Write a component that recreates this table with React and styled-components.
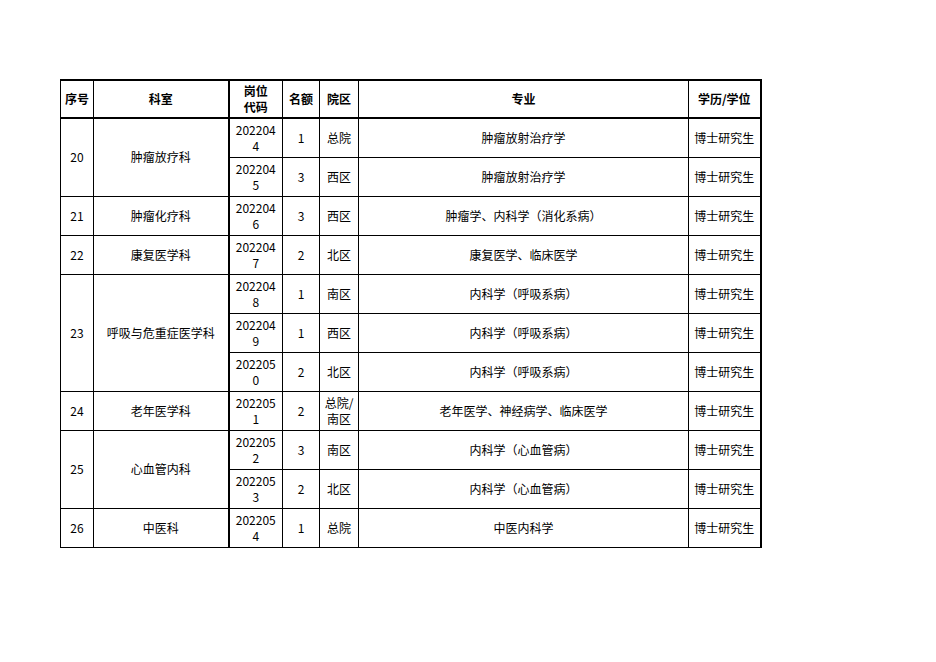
import React from 'react';
import styled, { createGlobalStyle } from 'styled-components';

const GlobalStyle = createGlobalStyle`
  html, body {
    margin: 0;
    padding: 0;
    background: #ffffff;
  }
  body {
    font-family: "Noto Sans CJK SC", "Noto Sans", sans-serif;
    color: #000;
  }
`;

const Page = styled.div`
  width: 936px;
  height: 662px;
  padding: 79px 0 0 60px;
  box-sizing: border-box;
`;

const Sheet = styled.table`
  border-collapse: collapse;
  table-layout: fixed;
  width: 700px;
  border-top: 2px solid #000;
  border-right: 2px solid #000;
  border-left: 1px solid #000;
  border-bottom: 1px solid #000;
  font-size: 12px;
  line-height: 16px;
`;

const HeadRow = styled.tr`
  height: 38px;
  border-bottom: 2px solid #000;
`;

const Row = styled.tr`
  height: 39px;
`;

const HeadCell = styled.th`
  border: 1px solid #000;
  border-left: ${(p) => (p.$strong ? '2px' : '1px')} solid #000;
  padding: 0 2px;
  font-weight: 700;
  text-align: center;
  vertical-align: middle;
  white-space: nowrap;
`;

const Cell = styled.td`
  border: 1px solid #000;
  border-left: ${(p) => (p.$strong ? '2px' : '1px')} solid #000;
  padding: 0 2px;
  font-weight: 400;
  text-align: center;
  vertical-align: middle;
  white-space: nowrap;
`;

const columns = [33, 135, 54, 37, 39, 330, 72];

const groups = [
  {
    no: 20,
    dept: '肿瘤放疗科',
    posts: [
      ['2022044', 1, '总院', '肿瘤放射治疗学'],
      ['2022045', 3, '西区', '肿瘤放射治疗学'],
    ],
  },
  { no: 21, dept: '肿瘤化疗科', posts: [['2022046', 3, '西区', '肿瘤学、内科学（消化系病）']] },
  { no: 22, dept: '康复医学科', posts: [['2022047', 2, '北区', '康复医学、临床医学']] },
  {
    no: 23,
    dept: '呼吸与危重症医学科',
    posts: [
      ['2022048', 1, '南区', '内科学（呼吸系病）'],
      ['2022049', 1, '西区', '内科学（呼吸系病）'],
      ['2022050', 2, '北区', '内科学（呼吸系病）'],
    ],
  },
  { no: 24, dept: '老年医学科', posts: [['2022051', 2, '总院/南区', '老年医学、神经病学、临床医学']] },
  {
    no: 25,
    dept: '心血管内科',
    posts: [
      ['2022052', 3, '南区', '内科学（心血管病）'],
      ['2022053', 2, '北区', '内科学（心血管病）'],
    ],
  },
  { no: 26, dept: '中医科', posts: [['2022054', 1, '总院', '中医内科学']] },
];

// 岗位代码 wraps after the sixth digit, as in the sheet
const splitCode = (code) => (
  <>
    {code.slice(0, 6)}
    <br />
    {code.slice(6)}
  </>
);

const splitArea = (area) => {
  const i = area.indexOf('/');
  if (i < 0) return area;
  return (
    <>
      {area.slice(0, i + 1)}
      <br />
      {area.slice(i + 1)}
    </>
  );
};

const App = () => (
  <Page>
    <GlobalStyle />
    <Sheet>
      <colgroup>
        {columns.map((w, i) => (
          <col key={i} style={{ width: w }} />
        ))}
      </colgroup>
      <thead>
        <HeadRow>
          <HeadCell>序号</HeadCell>
          <HeadCell>科室</HeadCell>
          <HeadCell $strong>
            岗位
            <br />
            代码
          </HeadCell>
          <HeadCell>名额</HeadCell>
          <HeadCell>院区</HeadCell>
          <HeadCell>专业</HeadCell>
          <HeadCell>学历/学位</HeadCell>
        </HeadRow>
      </thead>
      <tbody>
        {groups.map((g) =>
          g.posts.map(([code, count, area, major], i) => (
            <Row key={code}>
              {i === 0 && <Cell rowSpan={g.posts.length}>{g.no}</Cell>}
              {i === 0 && <Cell rowSpan={g.posts.length}>{g.dept}</Cell>}
              <Cell $strong>{splitCode(code)}</Cell>
              <Cell>{count}</Cell>
              <Cell>{splitArea(area)}</Cell>
              <Cell>{major}</Cell>
              <Cell>博士研究生</Cell>
            </Row>
          ))
        )}
      </tbody>
    </Sheet>
  </Page>
);

export default App;
